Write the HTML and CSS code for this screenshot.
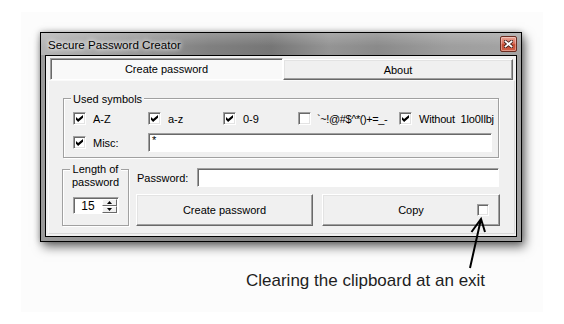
FILE: index.html
```html
<!doctype html>
<html>
    <head>
        <meta charset="utf-8" />
        <title>Secure Password Creator</title>
        <link rel="stylesheet" href="styles.css">
    </head>
    <body>
        <div class="canvas">
            <div class="window">
                <div class="titlebar">
                    <span class="title">Secure Password Creator</span>
                    <span class="close">
                        <svg width="9" height="8" viewBox="0 0 9 8">
                            <path d="M1.5 1.5 L7.5 6.5 M7.5 1.5 L1.5 6.5" stroke="#3a1a14" stroke-width="3.4" stroke-linecap="square" />
                            <path d="M1.5 1.5 L7.5 6.5 M7.5 1.5 L1.5 6.5" stroke="#fff" stroke-width="1.8" stroke-linecap="square" />
                        </svg>
                    </span>
                </div>
                <div class="client">
                    <div class="tabs">
                        <div class="tab active">Create password</div>
                        <div class="tab">About</div>
                    </div>
                    <div class="page">
                        <div class="group symbols">
                            <span class="caption">Used symbols</span>
                            <div class="row">
                                <label class="check"><span class="box checked"></span>A-Z</label>
                                <label class="check"><span class="box checked"></span>a-z</label>
                                <label class="check"><span class="box checked"></span>0-9</label>
                                <label class="check wide"><span class="box"></span>`~!@#$^*()+=_-</label>
                                <label class="check last"><span class="box checked"></span>Without&nbsp; 1lo0Ilbj</label>
                            </div>
                            <div class="row misc-row">
                                <label class="check"><span class="box checked"></span>Misc:</label>
                                <div class="field misc">*</div>
                            </div>
                        </div>
                        <div class="bottom">
                            <div class="group length">
                                <span class="caption">Length of<br>password</span>
                                <div class="spin">
                                    <span class="spin-value">15</span>
                                    <span class="spin-btns">
                                        <span class="spin-btn">
                                            <svg width="5" height="3" viewBox="0 0 5 3"><path d="M2.5 0 L5 3 L0 3 Z" /></svg>
                                        </span>
                                        <span class="spin-btn">
                                            <svg width="5" height="3" viewBox="0 0 5 3"><path d="M0 0 L5 0 L2.5 3 Z" /></svg>
                                        </span>
                                    </span>
                                </div>
                            </div>
                            <div class="pw">
                                <div class="pw-row">
                                    <span class="pw-label">Password:</span>
                                    <div class="field password"></div>
                                </div>
                                <div class="buttons">
                                    <div class="button create">Create password</div>
                                    <div class="button copy">
                                        <span class="copy-text">Copy</span>
                                        <span class="box small"></span>
                                    </div>
                                </div>
                            </div>
                        </div>
                    </div>
                </div>
            </div>
            <p class="note">Clearing the clipboard at an exit</p>
            <svg class="arrow" width="25" height="60" viewBox="0 0 25 60">
                <path d="M4 53 L15 4 M5.5 17 L15 4 L19 17" fill="none" stroke="#000" stroke-width="2" />
            </svg>
        </div>
    </body>
</html>
```

FILE: styles.css
```css
body {
    margin: 0;
    background: #fff;
    font-family: "Liberation Sans", Arial, sans-serif;
}
.canvas {
    position: relative;
    width: 522px;
    height: 300px;
    margin: 12px 0 0 21px;
    padding-top: 20px;
    box-sizing: border-box;
    background: #fcfcfc;
}
.window {
    width: 482px;
    height: 210px;
    margin-left: 19px;
    box-sizing: border-box;
    border: 1px solid #000;
    display: flex;
    flex-direction: column;
    background: linear-gradient(90deg, #9a9a9a, #848484 45%, #959595 70%, #a0a0a0);
    box-shadow: 3px 5px 10px rgba(0, 0, 0, 0.55), 0 0 6px rgba(0, 0, 0, 0.3);
}
.titlebar {
    height: 22px;
    flex: none;
    display: flex;
    align-items: center;
    justify-content: space-between;
    padding: 0 4px 0 7px;
    background:
        linear-gradient(180deg, rgba(255, 255, 255, 0.2), rgba(255, 255, 255, 0) 60%),
        linear-gradient(90deg, #b4b4b4 0%, #a0a0a0 15%, #808080 35%, #767676 48%, #949494 60%, #8a8a8a 70%, #9e9e9e 85%, #a4a4a4 100%);
}
.title {
    font-size: 11.6px;
    color: #000;
    text-shadow: 0 0 4px #fff, 0 0 6px #fff;
}
.close {
    width: 15px;
    height: 14px;
    border: 1px solid #6a2c20;
    border-radius: 2px;
    display: flex;
    align-items: center;
    justify-content: center;
    background: linear-gradient(180deg, #eaa596, #d8705c 45%, #c44a30 55%, #d06048);
    box-shadow: inset 0 0 0 1px rgba(255, 255, 255, 0.35);
}
.client {
    flex: 1;
    margin: 0 4px 4px;
    border: 1px solid #000;
    background: #f0f0f0;
    padding: 2px 0 0 2px;
    font-size: 11px;
    color: #000;
}
.tabs {
    display: flex;
    align-items: flex-start;
    margin-left: 2px;
}
.tab {
    box-sizing: border-box;
    height: 21px;
    width: 230px;
    margin-top: 1px;
    display: flex;
    align-items: center;
    justify-content: center;
    border: 1px solid;
    border-color: #fff #696969 #696969 #fff;
    box-shadow: inset -1px -1px #a0a0a0, inset 1px 1px #e3e3e3;
    background: #f0f0f0;
}
.tab.active {
    width: 233px;
    height: 22px;
    margin-top: 0;
    border-color: #a0a0a0 #fff #fff #a0a0a0;
    box-shadow: inset 1px 1px #696969;
    background: #f9f9f9;
}
.page {
    box-sizing: border-box;
    width: 467px;
    height: 154px;
    border: 1px solid;
    border-color: #fafafa #d8d8d8 #d8d8d8 #fafafa;
    padding: 17px 0 0 14px;
}
.group {
    box-sizing: border-box;
    display: flex;
    flex-direction: column;
    border: 1px solid #a0a0a0;
    box-shadow: inset 1px 1px #fff, 1px 1px #fff;
}
.caption {
    align-self: flex-start;
    line-height: 13px;
    padding: 0 2px;
    background: #f0f0f0;
}
.symbols {
    width: 436px;
    height: 60px;
    padding: 0 5px 0 9px;
}
.symbols .caption {
    margin: -6px 0 0 -2px;
}
.row {
    display: flex;
    align-items: center;
    height: 13px;
    margin-top: 6px;
}
.misc-row {
    height: 19px;
    margin-top: 8px;
}
.check {
    display: flex;
    align-items: center;
    gap: 7px;
    width: 75px;
    flex: none;
}
.check.wide {
    width: 101px;
    gap: 6px;
    letter-spacing: -0.4px;
}
.check.last {
    width: auto;
    gap: 7px;
    letter-spacing: -0.2px;
}
.box {
    box-sizing: border-box;
    width: 13px;
    height: 13px;
    flex: none;
    display: grid;
    place-items: center;
    background: #fff;
    border: 1px solid;
    border-color: #a0a0a0 #fff #fff #a0a0a0;
    box-shadow: inset 1px 1px #696969, inset -1px -1px #e3e3e3;
}
.box.checked::after {
    content: "";
    width: 7px;
    height: 7px;
    background: #000;
    clip-path: polygon(0 28%, 30% 58%, 100% 0, 100% 38%, 30% 100%, 0 68%);
}
.box.small {
    width: 12px;
    height: 12px;
}
.field {
    box-sizing: border-box;
    background: #fff;
    border: 1px solid;
    border-color: #a0a0a0 #fff #fff #a0a0a0;
    box-shadow: inset 1px 1px #696969;
}
.misc {
    width: 344px;
    height: 19px;
    padding: 1px 0 0 3px;
    line-height: 11px;
}
.bottom {
    display: flex;
    align-items: flex-start;
    margin-top: 10px;
}
.length {
    width: 67px;
    height: 57px;
    margin: 1px 0 0 -1px;
    align-items: center;
}
.length .caption {
    align-self: center;
    margin-top: -7px;
    text-align: center;
}
.spin {
    box-sizing: border-box;
    width: 46px;
    height: 17px;
    margin-top: 8px;
    display: flex;
    background: #fff;
    border: 1px solid;
    border-color: #a0a0a0 #fff #fff #a0a0a0;
    box-shadow: inset 1px 1px #696969;
    padding: 1px 1px 0 1px;
}
.spin-value {
    flex: 1;
    text-align: center;
    font-size: 12px;
    line-height: 14px;
}
.spin-btns {
    width: 15px;
    display: flex;
    flex-direction: column;
}
.spin-btn {
    flex: 1;
    box-sizing: border-box;
    display: flex;
    align-items: center;
    justify-content: center;
    background: #f0f0f0;
    border: 1px solid;
    border-color: #fff #696969 #696969 #fff;
}
.pw {
    width: 364px;
    margin-left: 7px;
}
.pw-row {
    display: flex;
    align-items: center;
    height: 19px;
}
.pw-label {
    width: 60px;
    padding-left: 1px;
}
.password {
    width: 302px;
    height: 19px;
}
.buttons {
    display: flex;
    gap: 9px;
    margin-top: 7px;
}
.button {
    box-sizing: border-box;
    width: 178px;
    height: 32px;
    display: grid;
    align-items: center;
    border: 1px solid;
    border-color: #fff #696969 #696969 #fff;
    box-shadow: inset -1px -1px #a0a0a0, inset 1px 1px #e3e3e3;
    background: #f0f0f0;
}
.button.create {
    justify-items: center;
}
.button.copy {
    width: 179px;
}
.copy-text,
.copy .box {
    grid-area: 1 / 1;
}
.copy-text {
    justify-self: center;
}
.copy .box {
    justify-self: end;
    margin-right: 10px;
}
.note {
    margin: 29px 0 0 225px;
    font-size: 17px;
    line-height: 19px;
    color: #1e1e1e;
}
.arrow {
    position: absolute;
    left: 445px;
    top: 203px;
}
```
